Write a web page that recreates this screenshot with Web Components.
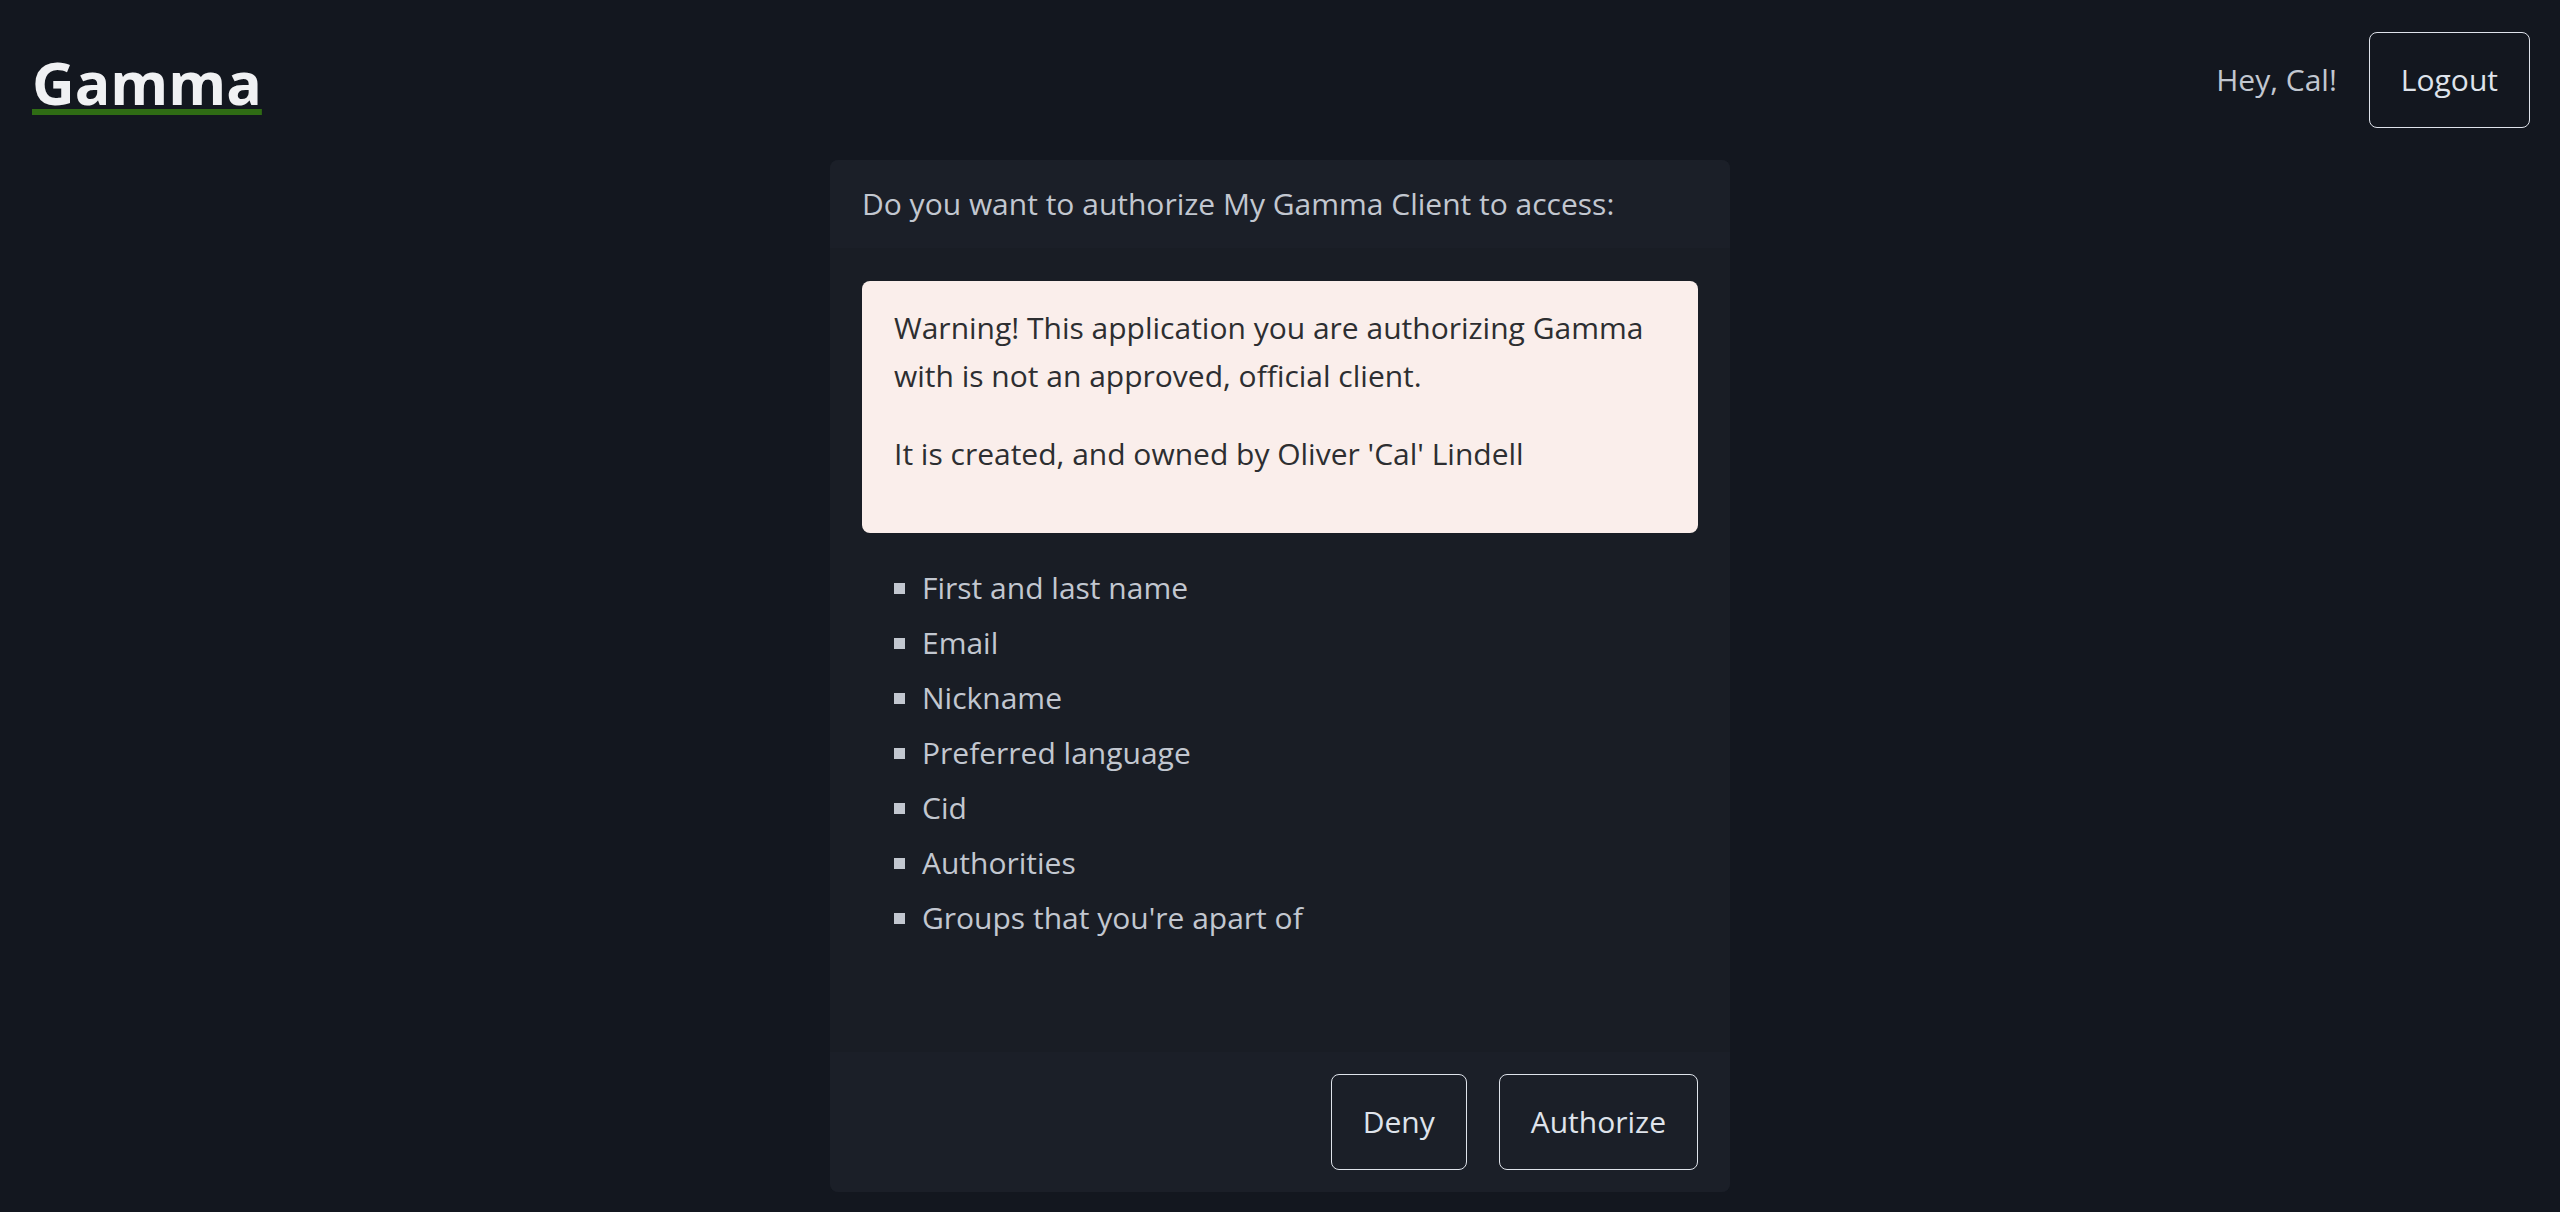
<!DOCTYPE html>
<html lang="en">
<head>
<meta charset="utf-8">
<meta name="viewport" content="width=device-width, initial-scale=1">
<title>Gamma</title>
<style>
  :root {
    --background: #13171f;
    --card: #191d25;
    --card-section: #1b1f28;
    --text: #c2c7d0;
    --bright: #dfe3eb;
    --heading: #f0f1f3;
    --accent: #2f6c14;
    --alert: #faeeeb;
    --alert-text: #2d2e31;
    --space: 32px;
    --radius: 8px;
  }
  body {
    margin: 0;
    min-height: 100vh;
    background: var(--background);
    color: var(--text);
    font: 30px/48px "Segoe UI", "Open Sans", "Noto Sans", sans-serif;
  }
</style>
</head>
<body>
<gamma-app>
  <gamma-header slot="header" user="Cal"></gamma-header>
  <gamma-card>
    <span slot="title">Do you want to authorize My Gamma Client to access:</span>
    <gamma-alert>
      <p>Warning! This application you are authorizing Gamma with is not an approved, official client.</p>
      <p>It is created, and owned by Oliver 'Cal' Lindell</p>
    </gamma-alert>
    <scope-list scopes="First and last name|Email|Nickname|Preferred language|Cid|Authorities|Groups that you're apart of"></scope-list>
    <gamma-button slot="actions">Deny</gamma-button>
    <gamma-button slot="actions">Authorize</gamma-button>
  </gamma-card>
</gamma-app>

<script>
  class ShadowElement extends HTMLElement {
    constructor() {
      super();
      this.attachShadow({ mode: "open" });
    }
    connectedCallback() {
      this.shadowRoot.innerHTML = this.render();
    }
  }

  customElements.define("gamma-app", class extends ShadowElement {
    render() {
      return `
        <style>
          :host { display: block; }
          main { max-width: 900px; margin: 0 auto; padding-bottom: 20px; }
        </style>
        <slot name="header"></slot>
        <main><slot></slot></main>`;
    }
  });

  customElements.define("gamma-button", class extends ShadowElement {
    render() {
      return `
        <style>
          :host { display: block; }
          button {
            display: block;
            margin: 0;
            padding: 23px 31px;
            border: 1px solid var(--bright);
            border-radius: var(--radius);
            background: transparent;
            color: var(--bright);
            font: inherit;
            cursor: pointer;
          }
        </style>
        <button type="button"><slot></slot></button>`;
    }
  });

  customElements.define("gamma-header", class extends ShadowElement {
    render() {
      return `
        <style>
          :host { display: block; }
          header {
            display: flex;
            align-items: center;
            justify-content: space-between;
            padding: 32px 30px 32px 32px;
          }
          h1 { margin: 0; padding-top: 4px; font-size: 59px; line-height: 72px; font-weight: 700; }
          a {
            color: var(--heading);
            text-decoration: underline var(--accent) 6px;
            text-underline-offset: 4px;
          }
          nav { display: flex; align-items: center; gap: var(--space); }
        </style>
        <header>
          <h1><a href="#">Gamma</a></h1>
          <nav>
            <span>Hey, ${this.getAttribute("user")}!</span>
            <gamma-button>Logout</gamma-button>
          </nav>
        </header>`;
    }
  });

  customElements.define("gamma-card", class extends ShadowElement {
    render() {
      return `
        <style>
          :host { display: block; }
          article {
            border-radius: var(--radius);
            overflow: hidden;
            background: var(--card);
          }
          header { padding: 20px 32px; background: var(--card-section); }
          .content { padding: 33px 32px 103px; }
          footer {
            display: flex;
            justify-content: flex-end;
            gap: var(--space);
            padding: 22px 32px;
            background: var(--card-section);
          }
        </style>
        <article>
          <header><slot name="title"></slot></header>
          <div class="content"><slot></slot></div>
          <footer><slot name="actions"></slot></footer>
        </article>`;
    }
  });

  customElements.define("gamma-alert", class extends ShadowElement {
    render() {
      return `
        <style>
          :host {
            display: block;
            margin-bottom: 31px;
            padding: 23px 32px 25px;
            border-radius: var(--radius);
            background: var(--alert);
            color: var(--alert-text);
          }
          ::slotted(p) { margin: 0 0 30px; }
        </style>
        <slot></slot>`;
    }
  });

  customElements.define("scope-list", class extends ShadowElement {
    render() {
      const items = this.getAttribute("scopes").split("|");
      return `
        <style>
          :host { display: block; }
          ul { margin: 0; padding: 0 0 0 60px; list-style: square; }
          li { margin: 0 0 7px; }
        </style>
        <ul>${items.map((item) => `<li>${item}</li>`).join("")}</ul>`;
    }
  });
</script>
</body>
</html>
